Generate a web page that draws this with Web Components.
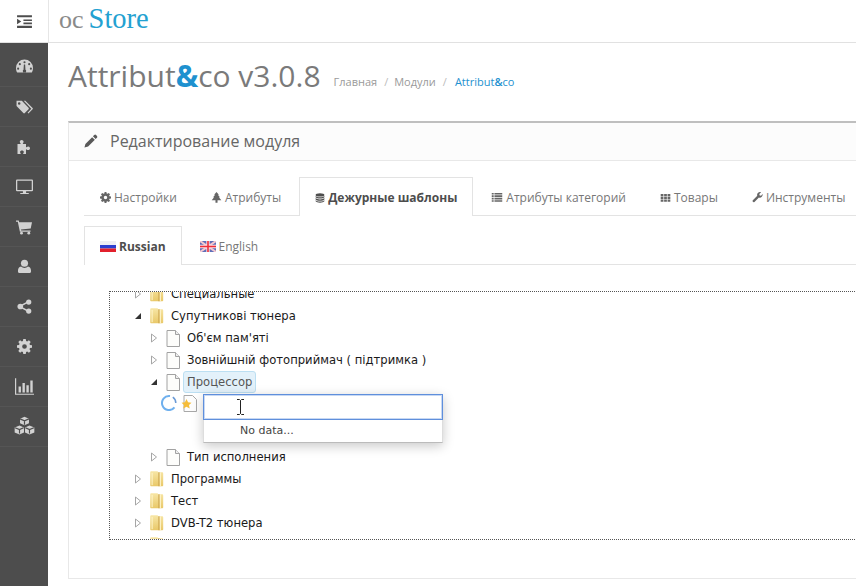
<!DOCTYPE html>
<html>
<head>
<meta charset="utf-8">
<title>Attribut&amp;co</title>
<style>
  html, body { margin: 0; height: 100%; overflow: hidden; background: #fff; }
  body { font-family: "Open Sans", sans-serif; }
</style>
</head>
<body>
<admin-page>
  <app-header slot="header"></app-header>
  <side-nav slot="nav"></side-nav>
  <page-title slot="title"></page-title>
  <module-panel slot="main">
    <tab-strip>
      <tab-item icon="cog" size="11">Настройки</tab-item>
      <tab-item icon="tree" size="11">Атрибуты</tab-item>
      <tab-item icon="database" size="10" active>Дежурные шаблоны</tab-item>
      <tab-item icon="list" size="12">Атрибуты категорий</tab-item>
      <tab-item icon="grid" size="11">Товары</tab-item>
      <tab-item icon="wrench" size="11">Инструменты</tab-item>
    </tab-strip>
    <tab-strip class="lang">
      <tab-item icon="ru" active>Russian</tab-item>
      <tab-item icon="gb">English</tab-item>
    </tab-strip>
    <tree-box>
      <tree-row level="0" type="folder" class="first">Специальные</tree-row>
      <tree-row level="0" type="folder" open>Супутникові тюнера</tree-row>
      <tree-row level="1" type="file">Об'єм пам'яті</tree-row>
      <tree-row level="1" type="file">Зовнійшній фотоприймач ( підтримка )</tree-row>
      <tree-row level="1" type="file" open selected>Процессор</tree-row>
      <new-node></new-node>
      <tree-row level="1" type="file">Тип исполнения</tree-row>
      <tree-row level="0" type="folder">Программы</tree-row>
      <tree-row level="0" type="folder">Тест</tree-row>
      <tree-row level="0" type="folder">DVB-T2 тюнера</tree-row>
      <tree-row level="0" type="folder" noarrow></tree-row>
    </tree-box>
  </module-panel>
</admin-page>

<script>
const ICONS = {
  menu: '<path d="M1 2h14v2H1zM7 6h8v1.600H7zM7 9h8v1.600H7zM1 12h14v2H1zM1 5.500l4 2.500-4 2.500z"/>',
  dashboard: '<path fill-rule="evenodd" d="M8 1.500a8 8 0 0 1 8 8c0 1.600-.4 3-1.100 4.200H1.100A8 8 0 0 1 0 9.500a8 8 0 0 1 8-8zM8 3a1 1 0 1 0 0 2 1 1 0 0 0 0-2zM3.600 4.800a1 1 0 1 0 0 2 1 1 0 0 0 0-2zM12.400 4.800a1 1 0 1 0 0 2 1 1 0 0 0 0-2zM2 9a1 1 0 1 0 0 2 1 1 0 0 0 0-2zM14 9a1 1 0 1 0 0 2 1 1 0 0 0 0-2zM7.400 6l-.3 5.100a1.500 1.500 0 1 0 1.800 0L8.600 6z"/>',
  tags: '<path fill-rule="evenodd" d="M.5 2.500h5l6.300 6.700a1 1 0 0 1 0 1.400l-3.500 3.600a1 1 0 0 1-1.400 0L.5 7.600zM3 4a1.200 1.200 0 1 0 0 2.400A1.200 1.200 0 0 0 3 4z"/><path d="M7.300 2.500h1.500l6.800 6.900a1 1 0 0 1 0 1.300l-3.900 3.900-.8-.8 3.500-3.800z"/>',
  puzzle: '<path d="M1.500 5h3.200c.4 0-.9-1-.9-2.200C3.800 1.700 4.700 1 5.700 1s1.900.7 1.900 1.800C7.600 4 6.400 5 6.800 5H10v3.200c0 .5 1-.8 2.200-.8 1.100 0 1.800.9 1.800 1.800s-.7 1.900-1.800 1.900C11 11.100 10 10 10 10.400V15H7.200c-.5 0 .6-.9.6-1.900 0-1-.8-1.500-1.800-1.500s-1.900.5-1.900 1.500c0 1 1 1.900.6 1.900H1.500z"/>',
  desktop: '<path fill-rule="evenodd" d="M1 1.500h14a1 1 0 0 1 1 1v9a1 1 0 0 1-1 1H9.500v1.500H12v1H4v-1h2.500v-1.500H1a1 1 0 0 1-1-1v-9a1 1 0 0 1 1-1zM1.200 2.700v8.600h13.600V2.700z"/>',
  cart: '<path d="M0 1.500h2.700l.5 1.700H16l-1.300 6.300-9.800 1 .3 1.100h9.300v1.200H3.900L1.800 2.700H0z"/><circle cx="5.500" cy="14.200" r="1.400"/><circle cx="12.800" cy="14.200" r="1.400"/>',
  user: '<circle cx="8" cy="4.500" r="3.800"/><path d="M4.300 8c1 1 2.300 1.500 3.700 1.500S10.700 9 11.700 8C14 8.300 15 10.300 15 13c0 1.300-.9 2-2 2H3c-1.100 0-2-.7-2-2 0-2.700 1-4.700 3.300-5z"/>',
  share: '<circle cx="3.500" cy="8" r="3"/><circle cx="12.500" cy="3.200" r="2.800"/><circle cx="12.500" cy="12.800" r="2.800"/><path d="M3 7l9-4.800.8 1.300L4.500 8l8.300 4.500-.8 1.300L3 9z"/>',
  cog: '<path fill-rule="evenodd" d="M6.700 0h2.600l.4 2.200 1.200.5L12.700 1.400l1.900 1.900-1.300 1.800.5 1.200 2.200.4v2.600l-2.200.4-.5 1.200 1.300 1.800-1.900 1.900-1.800-1.300-1.200.5-.4 2.200H6.700l-.4-2.200-1.200-.5-1.800 1.300-1.900-1.900 1.300-1.800-.5-1.200L0 9.300V6.700l2.200-.4.5-1.200L1.400 3.300l1.900-1.900 1.800 1.300 1.200-.5zM8 5.500a2.500 2.500 0 1 0 0 5 2.500 2.500 0 0 0 0-5z"/>',
  chart: '<path d="M0 1h1v13h15v1H0zM3 8h2v5H3zM6.300 5h2v8h-2zM9.600 7h2v6h-2zM12.900 3h2v10h-2z"/>',
  cubes: '<path d="M8 .5l3.400 1.500v3.600L8 7.100 4.600 5.600V2zM4.200 7.200l3.400 1.500v3.800l-3.400 1.600L.5 12.500V8.700zM11.800 7.200l3.700 1.500v3.800l-3.700 1.600-3.400-1.600V8.700z"/><path d="M4.600 2.200L8 3.700l3.400-1.500M8 3.700v3M.8 8.900l3.400 1.500 3.100-1.500M4.200 10.400v3M8.700 8.900l3.100 1.500 3.400-1.500M11.800 10.400v3" fill="none" stroke="#4d4d4d" stroke-width=".9"/>',
  tree: '<path d="M8 0l3.500 4H10l3 3.500h-1.500L15 12H9.500v3.500h-3V12H1l3.500-4.500H3l3-3.500H4.500z"/>',
  database: '<ellipse cx="8" cy="3" rx="7" ry="2.600"/><path d="M1 4.600c1 1.400 3.800 2.100 7 2.100s6-.7 7-2.100v2.200c-1 1.300-3.800 2-7 2s-6-.7-7-2zM1 8.100c1 1.400 3.800 2.100 7 2.100s6-.7 7-2.100v2.200c-1 1.300-3.800 2-7 2s-6-.7-7-2zM1 11.500c1 1.400 3.800 2.100 7 2.100s6-.7 7-2.100v1.700c-1 1.500-3.800 2.300-7 2.300s-6-.8-7-2.300z"/>',
  list: '<path d="M1 2.500h2.600v2.300H1zM4.600 2.500H15v2.300H4.600zM1 5.800h2.600v2.300H1zM4.600 5.800H15v2.300H4.600zM1 9.100h2.600v2.300H1zM4.600 9.100H15v2.300H4.600zM1 12.300h2.600v1.900H1zM4.600 12.300H15v1.900H4.600z"/>',
  grid: '<path d="M1 3h4v3H1zM6 3h4v3H6zM11 3h4v3h-4zM1 7h4v3H1zM6 7h4v3H6zM11 7h4v3h-4zM1 11h4v3H1zM6 11h4v3H6zM11 11h4v3h-4z"/>',
  wrench: '<path d="M15.500 4c0 2.300-1.900 4.200-4.100 4.200-.5 0-1-.1-1.400-.3l-6.400 6.500a1.700 1.700 0 0 1-2.400-2.400l6.500-6.400C7.500 5.200 7.400 4.700 7.400 4.200 7.400 2 9.300 0 11.500 0c.6 0 1.200.1 1.700.4L10.600 3l.6 2.100 2 .5 2.100-2.600c.1.300.2.700.2 1z"/>',
  pencil: '<path d="M11.700 1.200a1.500 1.500 0 0 1 2.100 0l1 1a1.500 1.500 0 0 1 0 2.100L13.300 5.800l-3.100-3.100zM9.300 3.600l3.100 3.100-7.700 7.700L.5 15.500l1.100-4.200z"/>'
}

const FLAGS = {
  ru: '<svg width="16" height="11" viewBox="0 0 16 11"><rect width="16" height="4" fill="#eeeef4"/><rect y="4" width="16" height="3.500" fill="#2b3fd0"/><rect y="7.500" width="16" height="3.500" fill="#e2202c"/></svg>',
  gb: '<svg width="16" height="11" viewBox="0 0 16 11"><rect width="16" height="11" fill="#5f6fb8"/><path d="M0 0l16 11M16 0L0 11" stroke="#f4c8d0" stroke-width="2"/><path d="M8 0v11M0 5.500h16" stroke="#fbdfe3" stroke-width="3.400"/><path d="M8 0v11M0 5.500h16" stroke="#ee2f3a" stroke-width="1.600"/></svg>'
}

function icon(name, size, color) {
  return `<svg width="${size}" height="${size}" viewBox="0 0 16 16" fill="${color}" aria-hidden="true">${ICONS[name]}</svg>`
}

class AdminPage extends HTMLElement {
  constructor() {
    super()
    this.attachShadow({ mode: 'open' }).innerHTML = `
      <style>
        :host { display: grid; grid-template-columns: 48px 1fr; grid-template-rows: 43px 1fr; width: 856px; height: 586px; overflow: hidden; }
        .head { grid-column: 1 / 3; }
        main { min-width: 0; padding: 0 0 0 20px; }
      </style>
      <div class="head"><slot name="header"></slot></div>
      <slot name="nav"></slot>
      <main><slot name="title"></slot><slot name="main"></slot></main>`
  }
}

class AppHeader extends HTMLElement {
  constructor() {
    super()
    this.attachShadow({ mode: 'open' }).innerHTML = `
      <style>
        :host { display: flex; height: 42px; border-bottom: 1px solid #e1e1e1; background: #fff; }
        .toggle { width: 48px; border-right: 1px solid #e6e6e6; display: flex; align-items: center; justify-content: center; }
        .logo { padding-left: 10px; font: 26px/38px "Liberation Serif", serif; color: #8a8a8a; }
        .logo b { font-weight: 400; color: #23a1d1; margin-left: 5px; font-size: 28.500px; }
      </style>
      <div class="toggle">${icon('menu', 17, '#4d4d4d')}</div>
      <div class="logo">oc<b>Store</b></div>`
  }
}

class SideNav extends HTMLElement {
  constructor() {
    super()
    const items = [['dashboard', 17], ['tags', 17], ['puzzle', 16], ['desktop', 17], ['cart', 16], ['user', 15], ['share', 15], ['cog', 15], ['chart', 19], ['cubes', 21]]
    this.attachShadow({ mode: 'open' }).innerHTML = `
      <style>
        :host { display: block; width: 48px; background: #4d4d4d; padding-top: 4px; }
        div { height: 39px; border-bottom: 1px solid #555; display: flex; align-items: center; justify-content: center; }
      </style>
      ${items.map(([n, s]) => `<div>${icon(n, s, '#d2d2d2')}</div>`).join('')}`
  }
}

class PageTitle extends HTMLElement {
  constructor() {
    super()
    this.attachShadow({ mode: 'open' }).innerHTML = `
      <style>
        :host { display: flex; align-items: baseline; height: 78px; color: #7a7a7a; }
        h1 { margin: 0; font: 400 30px/66px "Open Sans", sans-serif; }
        b { color: #1e91cf; }
        ul { display: flex; margin: 0 0 0 13px; padding: 0; list-style: none; font-size: 11px; line-height: 13px; color: #9a9a9a; position: relative; top: -1px; }
        li + li::before { content: "/"; padding: 0 6px 0 7px; color: #bbb; }
        li.on::before { padding-right: 8px; }
        .on { color: #1e91cf; }
        .on b { font-weight: 600; }
      </style>
      <h1>Attribut<b>&amp;</b>co v3.0.8</h1>
      <ul><li>Главная</li><li>Модули</li><li class="on">Attribut<b>&amp;</b>co</li></ul>`
  }
}

class ModulePanel extends HTMLElement {
  constructor() {
    super()
    this.attachShadow({ mode: 'open' }).innerHTML = `
      <style>
        :host { display: block; width: 830px; height: 458px; box-sizing: border-box; border: 1px solid #e8e8e8; border-top: 2px solid #bfbfbf; background: #fff; }
        header { display: flex; align-items: center; gap: 12px; height: 35px; padding: 0 0 2px 15px; background: #fcfcfc; border-bottom: 1px solid #e8e8e8; font-size: 16px; color: #666; }
        .body { padding: 16px 0 0 15px; }
      </style>
      <header>${icon('pencil', 14, '#595959')}<span>Редактирование модуля</span></header>
      <div class="body"><slot></slot></div>`
  }
}

class TabStrip extends HTMLElement {
  constructor() {
    super()
    this.attachShadow({ mode: 'open' }).innerHTML = `
      <style>
        :host { display: flex; gap: 2px; height: 38px; margin-bottom: 10px; border-bottom: 1px solid #e3e3e3; }
        :host(.lang) { margin-bottom: 26px; }
      </style>
      <slot></slot>`
  }
}

class TabItem extends HTMLElement {
  constructor() {
    super()
    const name = this.getAttribute('icon')
    const active = this.hasAttribute('active')
    const art = FLAGS[name] || icon(name, this.getAttribute('size') || 12, active ? '#4d4d4d' : '#666')
    this.attachShadow({ mode: 'open' }).innerHTML = `
      <style>
        :host { display: flex; align-items: center; gap: 3px; height: 38px; box-sizing: border-box; padding: 1px 15px 0; font-size: 12px; color: #777; border: 1px solid transparent; border-bottom: 0; white-space: nowrap; }
        :host([active]) { font-weight: 700; color: #4d4d4d; background: #fff; border-color: #e3e3e3; height: 39px; }
        svg { display: block; flex: none; }
      </style>
      ${art}<span><slot></slot></span>`
  }
}

class TreeBox extends HTMLElement {
  constructor() {
    super()
    this.attachShadow({ mode: 'open' }).innerHTML = `
      <style>
        :host { display: block; width: 780px; height: 249px; margin-left: 25px; box-sizing: border-box; border: 1px dotted #555; overflow: hidden; padding-left: 23px; font: 11.600px "DejaVu Sans", Verdana, sans-serif; color: #1a1a1a; }
      </style>
      <slot></slot>`
  }
}

const FOLDER = `<svg width="16" height="18" viewBox="0 0 14 16"><defs><linearGradient id="f" x1="0" y1="0" x2="0" y2="1"><stop offset="0" stop-color="#f7e6a6"/><stop offset="1" stop-color="#e9c868"/></linearGradient></defs><path d="M1 2c0-.6.400-1 1-1h5c.6 0 1 .4 1 1h3.500c.6 0 1 .4 1 1v10.500c0 .6-.4 1-1 1H2c-.6 0-1-.4-1-1z" fill="url(#f)"/><path d="M8 2h1.500v12.500H8z" fill="#c9a24a" opacity=".65"/><path d="M9.500 2h1v12.500h-1z" fill="#fdf3c8"/><path d="M2 2.500h1.500v11H2z" fill="#fff6cf" opacity=".6"/></svg>`
const FILE = `<svg width="14" height="17" viewBox="0 0 14 17"><path d="M1 .5h8.500l4 4v12H1z" fill="#fdfdfb" stroke="#a2a2a2"/><path d="M9.500.5v4h4" fill="#eee" stroke="#a2a2a2"/></svg>`

class TreeRow extends HTMLElement {
  constructor() {
    super()
    const level = +this.getAttribute('level')
    const open = this.hasAttribute('open')
    let arrow = open
      ? '<svg width="8" height="8" viewBox="0 0 8 8"><path d="M7 1v6H1z" fill="#333"/></svg>'
      : '<svg width="8" height="10" viewBox="0 0 8 10"><path d="M1.500 1l5 4-5 4z" fill="#fff" stroke="#a6a6a6"/></svg>'
    if (this.hasAttribute('noarrow')) arrow = ''
    const art = this.getAttribute('type') === 'folder' ? FOLDER : FILE
    this.attachShadow({ mode: 'open' }).innerHTML = `
      <style>
        :host { display: flex; align-items: center; height: 22px; padding-left: ${level * 16}px; white-space: nowrap; }
        :host(.first) { margin-top: -9px; }
        .arrow { width: 16px; display: flex; justify-content: flex-start; padding-left: 1px; box-sizing: border-box; }
        .art { width: 16px; display: flex; justify-content: center; }
        .label { margin-left: 2px; padding: 0 3px; height: 20px; line-height: 20px; border: 1px solid transparent; border-radius: 3px; }
        :host([selected]) .label { background: #e3f1fa; border-color: #bcdff2; color: #555; }
        .arrow svg, .art svg { display: block; }
      </style>
      <span class="arrow">${arrow}</span><span class="art">${art}</span><span class="label"><slot></slot></span>`
  }
}

class NewNode extends HTMLElement {
  constructor() {
    super()
    this.attachShadow({ mode: 'open' }).innerHTML = `
      <style>
        :host { display: block; position: relative; height: 53px; }
        .spin { position: absolute; left: 28px; top: 2px; }
        .file { position: absolute; left: 48px; top: 2px; }
        .combo { position: absolute; left: 70px; top: 1px; width: 240px; box-shadow: 0 3px 12px rgba(0,0,0,.22); border-radius: 2px; background: #fff; }
        input { display: block; width: 100%; height: 26px; box-sizing: border-box; border: 1px solid #5f8fdc; outline: 0; padding: 0; background: #fff; box-shadow: inset 0 0 0 1px rgba(95,143,220,.35); }
        .drop { height: 23px; box-sizing: border-box; border: 1px solid #ddd; border-top: 0; border-bottom-color: #bbb; padding-left: 36px; line-height: 22px; font-size: 11px; color: #444; }
        .beam { position: absolute; left: 33px; top: 5px; }
      </style>
      <svg class="spin" width="16" height="16" viewBox="0 0 16 16"><path d="M13.500 12.400A7 7 0 1 1 9 1.100" fill="none" stroke="#6fb0ee" stroke-width="2"/><path d="M14.800 8a7 7 0 0 0-3-5.800" fill="none" stroke="#2b6fc4" stroke-width="1.500" opacity=".7"/></svg>
      <svg class="file" width="16" height="17" viewBox="0 0 16 17"><path d="M3 .5h8.500l4 4v12H3z" fill="#fdfdfd" stroke="#a8a8a8"/><path d="M5.500 4l1.600 3.300 3.400.4-2.500 2.300.7 3.400-3.200-1.700-3.200 1.700.7-3.400L.500 7.700l3.400-.4z" fill="#f5bd3a"/></svg>
      <div class="combo">
        <input type="text" aria-label="Название">
        <div class="drop">No data...</div>
        <svg class="beam" width="9" height="16" viewBox="0 0 9 16"><path d="M1 .5h2.500L4.500 1.500 5.500.5H8M4.500 1.500v13M1 15.500h2.500l1-1 1 1H8" fill="none" stroke="#222"/></svg>
      </div>`
  }
}

customElements.define('admin-page', AdminPage)
customElements.define('app-header', AppHeader)
customElements.define('side-nav', SideNav)
customElements.define('page-title', PageTitle)
customElements.define('module-panel', ModulePanel)
customElements.define('tab-strip', TabStrip)
customElements.define('tab-item', TabItem)
customElements.define('tree-box', TreeBox)
customElements.define('tree-row', TreeRow)
customElements.define('new-node', NewNode)
</script>
</body>
</html>
